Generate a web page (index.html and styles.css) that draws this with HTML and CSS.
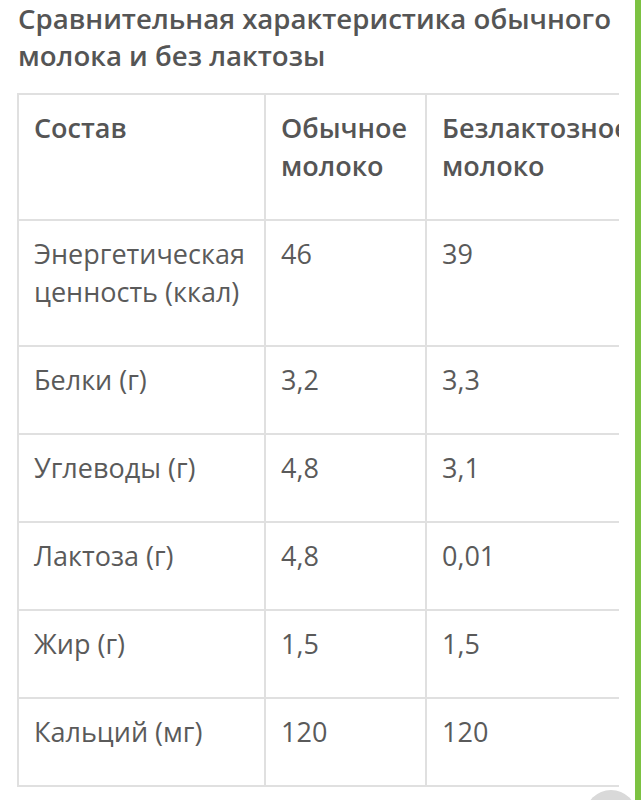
FILE: index.html
```html
<!DOCTYPE html>
<html lang="ru">
<head>
<meta charset="utf-8">
<title>Сравнительная характеристика</title>
<link rel="stylesheet" href="styles.css">
</head>
<body>
<div class="page">
  <h2 class="title">Сравнительная характеристика обычного молока и без лактозы</h2>
  <div class="scroller">
    <table class="milk">
      <thead>
        <tr>
          <th class="c1">Состав</th>
          <th class="c2">Обычное молоко</th>
          <th class="c3">Безлактозное молоко</th>
        </tr>
      </thead>
      <tbody>
        <tr><td class="c1">Энергетическая ценность (ккал)</td><td class="c2">46</td><td class="c3">39</td></tr>
        <tr><td class="c1">Белки (г)</td><td class="c2">3,2</td><td class="c3">3,3</td></tr>
        <tr><td class="c1">Углеводы (г)</td><td class="c2">4,8</td><td class="c3">3,1</td></tr>
        <tr><td class="c1">Лактоза (г)</td><td class="c2">4,8</td><td class="c3">0,01</td></tr>
        <tr><td class="c1">Жир (г)</td><td class="c2">1,5</td><td class="c3">1,5</td></tr>
        <tr><td class="c1">Кальций (мг)</td><td class="c2">120</td><td class="c3">120</td></tr>
      </tbody>
    </table>
  </div>
</div>
<div class="side-bar"></div>
<div class="to-top"></div>
</body>
</html>
```
FILE: styles.css
```css
html, body {
  margin: 0;
  padding: 0;
  background: #ffffff;
}
body {
  font-family: "Open Sans", "Noto Sans", sans-serif;
  color: #555555;
  overflow: hidden;
  height: 800px;
}
.page {
  padding: 0 22px 0 17px;
}
.title {
  margin: 0;
  padding: 0 0 0 1px;
  font-size: 27.6px;
  line-height: 37px;
  font-weight: 600;
  color: #555555;
  letter-spacing: 0;
}
.scroller {
  margin-top: 19px;
  width: 602px;
  overflow: hidden;
}
.milk {
  border-collapse: separate;
  border-spacing: 0;
  table-layout: fixed;
  width: 700px;
  border-top: 2px solid #e0e0e0;
  border-left: 2px solid #e0e0e0;
}
.milk th, .milk td {
  box-sizing: border-box;
  text-align: left;
  vertical-align: top;
  padding: 14px 15px 34px 15px;
  border-right: 2px solid #e0e0e0;
  border-bottom: 2px solid #e0e0e0;
  font-size: 27px;
  line-height: 38px;
  color: #5a5a5a;
  white-space: normal;
}
.milk th {
  font-weight: 600;
  color: #555555;
}
.milk td {
  font-weight: 400;
}
.c1 { width: 247px; }
.c2 { width: 161px; }
.c3 { width: 290px; white-space: nowrap; }
.milk th.c3 { white-space: normal; }
.side-bar {
  position: fixed;
  top: 0;
  right: 0;
  width: 6px;
  height: 100%;
  background: #7cc242;
}
.to-top {
  position: fixed;
  right: 4px;
  bottom: -42px;
  width: 52px;
  height: 52px;
  border-radius: 50%;
  background: #d9d9d9;
}
```
